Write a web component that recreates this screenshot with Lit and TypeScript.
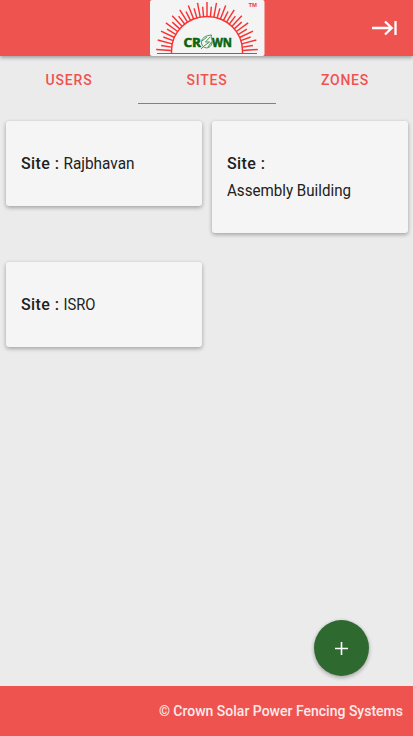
import { LitElement, html, svg, css } from "lit";
import { customElement, property } from "lit/decorators.js";

// Rays of the rising sun, fanned around the centre of the base line.
const RAYS = Array.from({ length: 33 }, (_, i) => {
  const a = (Math.PI * (4 + (i * 172) / 32)) / 180;
  const outer = i % 2 === 0 ? 51 : 46.5;
  const x = (r: number) => (57 - Math.cos(a) * r).toFixed(2);
  const y = (r: number) => (53 - Math.sin(a) * r).toFixed(2);
  return { x1: x(36), y1: y(36), x2: x(outer), y2: y(outer) };
});

@customElement("crown-logo")
class CrownLogo extends LitElement {
  static styles = css`
    :host { display: block; width: 115px; height: 56px; }
    svg { display: block; }
    .brand { font: 700 12.5px "Open Sans", sans-serif; fill: #0a650f; stroke: #0a650f; stroke-width: .6; }
    .tm { font: 700 5.5px "Liberation Sans", sans-serif; fill: #ed3b3b; }
  `;
  render() {
    return html`<svg width="115" height="56" viewBox="0 0 115 56">
      <rect width="114.5" height="56" rx="2" fill="#f4f4f4" />
      <g stroke="#f83232" stroke-width="1.45" fill="none">
        ${RAYS.map((r) => svg`<line x1=${r.x1} y1=${r.y1} x2=${r.x2} y2=${r.y2} />`)}
        <path d="M21.500 53.500V51A35.500 34.500 0 0 1 92.500 51V53.500" />
        <path d="M7 53.500H107" stroke-width="1.1" />
      </g>
      <text class="tm" x="98.5" y="6.5" textLength="8.5" lengthAdjust="spacingAndGlyphs">TM</text>
      <text class="brand" x="33.5" y="46.6" textLength="17.5" lengthAdjust="spacingAndGlyphs">CR</text>
      <text class="brand" x="62" y="46.6" textLength="20" lengthAdjust="spacingAndGlyphs">WN</text>
      <g fill="none" stroke="#348c48" stroke-width=".9">
        <path d="M61.5 35C55 35.5 51 38.5 51.500 43C52 49 60.500 50 62 43C63 39 60 38 61.500 35Z" />
        <path d="M51 49L54 46M60 37L55.500 42H59.500L54 46M52 41L57 37M58 47L61.500 42" />
      </g>
    </svg>`;
  }
}

@customElement("site-card")
class SiteCard extends LitElement {
  @property() name = "";
  @property({ type: Number }) span = 0;
  @property({ type: Boolean }) wrap = false;
  static styles = css`
    :host {
      display: block; box-sizing: border-box; padding: 29px 15px; border-radius: 3px;
      background: #f5f5f5; color: #212121; font: 16px/27px Roboto, sans-serif;
      box-shadow: 0 2px 4px rgba(0,0,0,.2), 0 1px 4px rgba(0,0,0,.14);
    }
    svg { display: block; overflow: visible; }
    .label { font-weight: 500; }
    text { fill: #212121; }
  `;
  render() {
    return html`<svg width="166" height=${this.wrap ? 54 : 27}>
      <text class="label" x="0" y="19" textLength="38">Site :</text>
      <text x=${this.wrap ? 0 : 42.5} y=${this.wrap ? 46 : 19}
        textLength=${this.span} lengthAdjust="spacingAndGlyphs">${this.name}</text>
    </svg>`;
  }
}

@customElement("app-root")
class AppRoot extends LitElement {
  static styles = css`
    :host {
      display: flex; flex-direction: column; height: 736px; position: relative; overflow: hidden;
      background: #ebebeb; font-family: Roboto, sans-serif;
    }
    header {
      flex: none; display: grid; grid-template-columns: 1fr 115px 1fr; height: 56px;
      background: #ef5350; z-index: 1;
      box-shadow: 0 2px 4px rgba(0,0,0,.22), 0 1px 4px rgba(0,0,0,.16);
    }
    crown-logo { grid-column: 2; margin-left: 1px; }
    .exit { justify-self: end; margin: 13px 13px 0 0; }
    nav { display: grid; grid-template-columns: repeat(3, 138px); height: 48px; flex: none; }
    .tab {
      box-sizing: border-box; height: 48px; text-align: center; color: #ef5350;
      font-size: 14px; font-weight: 500; line-height: 48px; letter-spacing: .8px;
    }
    .active { border-bottom: 1px solid #ef5350; }
    main {
      flex: 1; display: grid; grid-template-columns: 196px 196px; column-gap: 10px; row-gap: 29px;
      align-items: start; align-content: start; padding: 17px 5px 0 6px;
    }
    .add {
      position: absolute; right: 44px; bottom: 60px; width: 55px; height: 56px; border: 0; padding: 0;
      border-radius: 50%; background: #2e6930; display: grid; place-items: center;
      box-shadow: 0 2px 4px rgba(0,0,0,.2), 0 1px 4px rgba(0,0,0,.14);
    }
    footer {
      height: 50px; flex: none; box-sizing: border-box; padding-right: 10px; background: #ef5350;
      color: #fbeaea; font-size: 14px; font-weight: 500; line-height: 50px; text-align: right;
    }
  `;
  render() {
    return html`
      <header>
        <crown-logo></crown-logo>
        <svg class="exit" width="30" height="30" viewBox="0 0 30 30" fill="none" stroke="#fff" stroke-width="2.3">
          <path d="M2 15H22M15 8.500L21.700 15L15 21.500M25.500 8V22" />
        </svg>
      </header>
      <nav>
        <div class="tab">USERS</div>
        <div class="tab active">SITES</div>
        <div class="tab">ZONES</div>
      </nav>
      <main>
        <site-card name="Rajbhavan" span="71"></site-card>
        <site-card name="Assembly Building" span="124" wrap></site-card>
        <site-card name="ISRO" span="32"></site-card>
      </main>
      <button class="add" aria-label="Add site">
        <svg width="13" height="13" viewBox="0 0 13 13" stroke="#fff" stroke-width="1.6"><path d="M6.500 0V13M0 6.500H13" /></svg>
      </button>
      <footer>© Crown Solar Power Fencing Systems</footer>
    `;
  }
}
